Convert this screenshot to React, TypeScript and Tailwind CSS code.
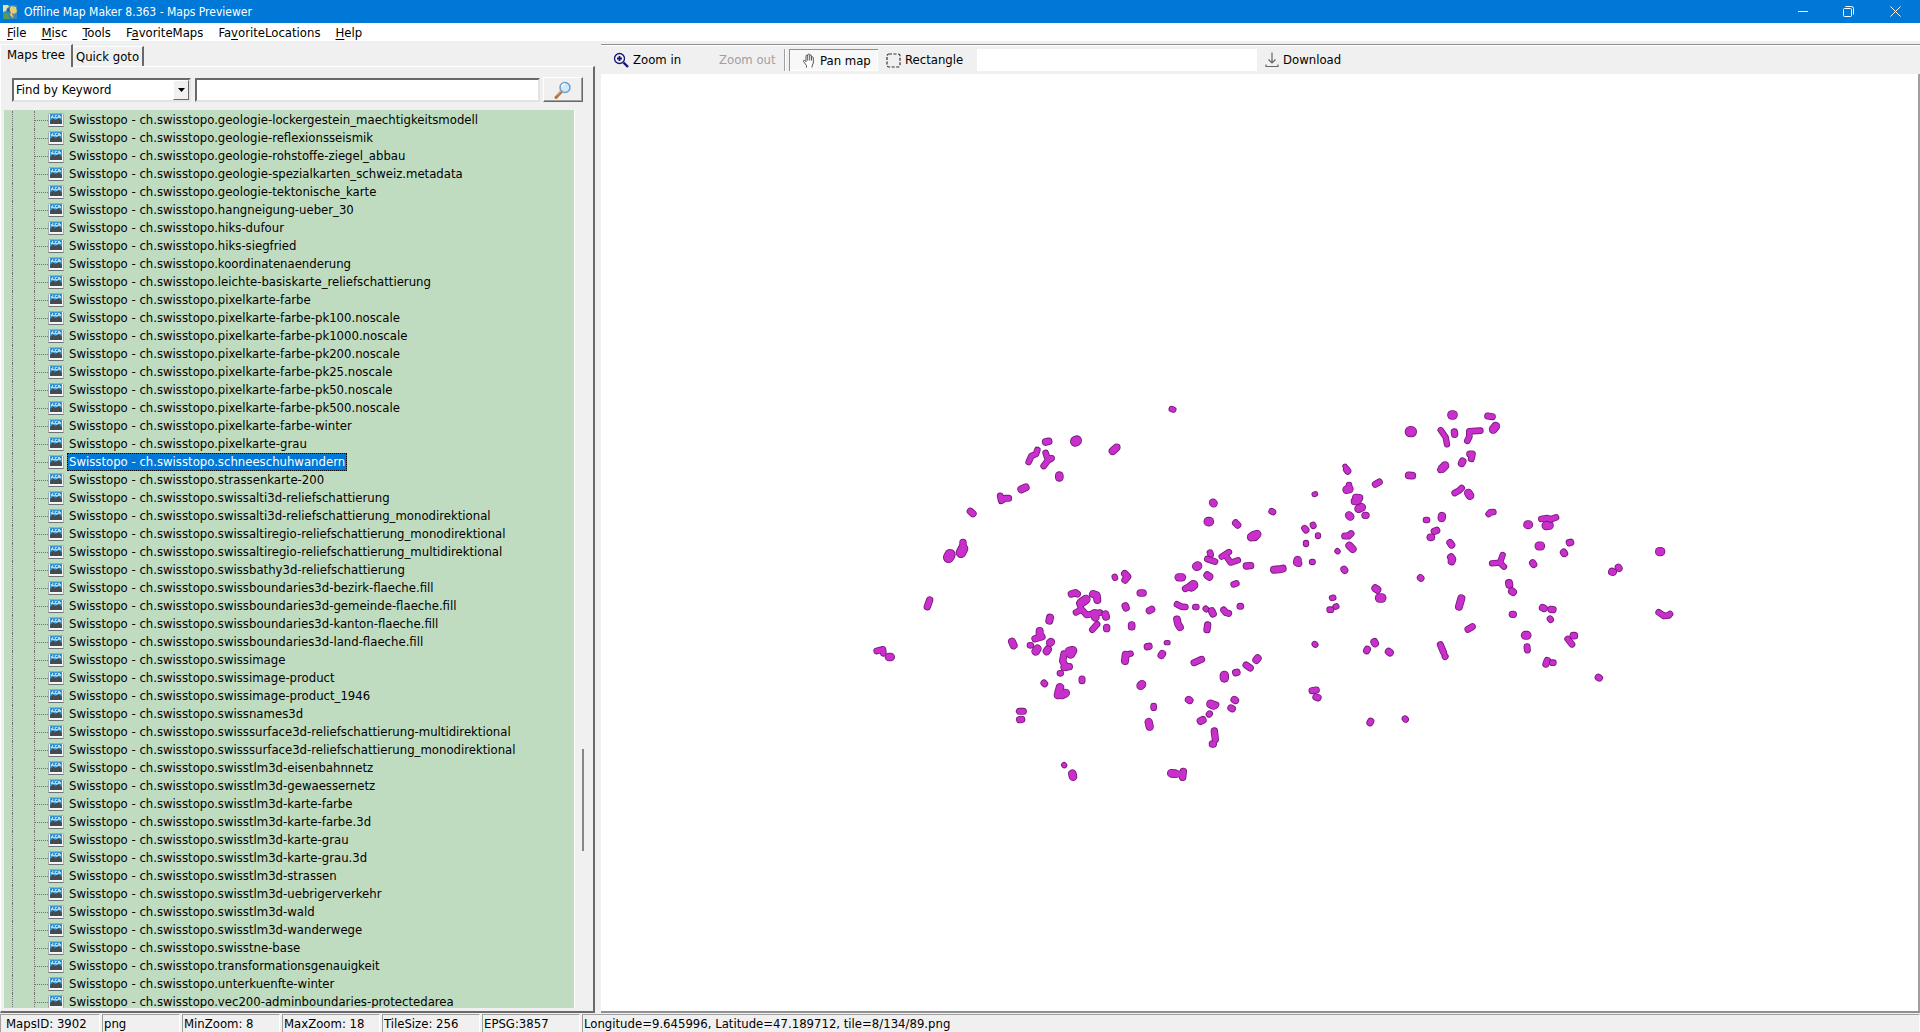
import { useState } from "react";
import type { ReactNode } from "react";

const MENU = [
  { before: "", key: "F", after: "ile" },
  { before: "", key: "M", after: "isc" },
  { before: "", key: "T", after: "ools" },
  { before: "F", key: "a", after: "voriteMaps" },
  { before: "Fa", key: "v", after: "oriteLocations" },
  { before: "", key: "H", after: "elp" },
];

const LAYERS = [
  "geologie-lockergestein_maechtigkeitsmodell",
  "geologie-reflexionsseismik",
  "geologie-rohstoffe-ziegel_abbau",
  "geologie-spezialkarten_schweiz.metadata",
  "geologie-tektonische_karte",
  "hangneigung-ueber_30",
  "hiks-dufour",
  "hiks-siegfried",
  "koordinatenaenderung",
  "leichte-basiskarte_reliefschattierung",
  "pixelkarte-farbe",
  "pixelkarte-farbe-pk100.noscale",
  "pixelkarte-farbe-pk1000.noscale",
  "pixelkarte-farbe-pk200.noscale",
  "pixelkarte-farbe-pk25.noscale",
  "pixelkarte-farbe-pk50.noscale",
  "pixelkarte-farbe-pk500.noscale",
  "pixelkarte-farbe-winter",
  "pixelkarte-grau",
  "schneeschuhwandern",
  "strassenkarte-200",
  "swissalti3d-reliefschattierung",
  "swissalti3d-reliefschattierung_monodirektional",
  "swissaltiregio-reliefschattierung_monodirektional",
  "swissaltiregio-reliefschattierung_multidirektional",
  "swissbathy3d-reliefschattierung",
  "swissboundaries3d-bezirk-flaeche.fill",
  "swissboundaries3d-gemeinde-flaeche.fill",
  "swissboundaries3d-kanton-flaeche.fill",
  "swissboundaries3d-land-flaeche.fill",
  "swissimage",
  "swissimage-product",
  "swissimage-product_1946",
  "swissnames3d",
  "swisssurface3d-reliefschattierung-multidirektional",
  "swisssurface3d-reliefschattierung_monodirektional",
  "swisstlm3d-eisenbahnnetz",
  "swisstlm3d-gewaessernetz",
  "swisstlm3d-karte-farbe",
  "swisstlm3d-karte-farbe.3d",
  "swisstlm3d-karte-grau",
  "swisstlm3d-karte-grau.3d",
  "swisstlm3d-strassen",
  "swisstlm3d-uebrigerverkehr",
  "swisstlm3d-wald",
  "swisstlm3d-wanderwege",
  "swisstne-base",
  "transformationsgenauigkeit",
  "unterkuenfte-winter",
  "vec200-adminboundaries-protectedarea",
];

// Each area is one or more brush strokes split by "|": brush size, then x y pairs,
// in thirds of a pixel from the sheet's origin.
const SHEETS = [
  {
    x: 259,
    y: 326,
    areas: [
      "21 557 126 566 124", "30 646 124 650 122", "22 758 153 769 143|14 772 139 773 139",
      "18 532 150 528 162 514 168 506 186", "18 557 159 563 177 575 175 563 182 551 198",
      "24 598 227 598 232", "22 484 268 497 262", "19 421 288 424 302 434 295 446 295",
      "20 331 334 339 341", "32 270 464 266 472", "20 309 427 309 440|30 309 446 303 458",
      "17 935 27 940 29", "17 764 530 765 533",
    ],
  },
  {
    x: 259,
    y: 506,
    areas: [
      "20 209 60 202 80", "18 50 213 69 208 70 220", "24 87 231 92 231", "22 456 185 461 196",
      "18 510 196 512 196", "22 570 113 568 122", "22 539 153 539 168|20 525 176 546 170",
      "24 532 206 527 214", "22 564 208 560 214", "23 573 186 570 188", "20 634 42 646 38 652 42",
      "22 699 42 710 46 712 60",
      "26 678 58 664 68|16 657 70 664 88|18 648 97 665 88 680 105 705 100 720 98|24 703 100 706 112",
      "22 736 103 738 110", "18 711 133 697 149", "20 740 142 740 146",
      "26 628 214 638 212 632 222|20 612 222 608 243 618 262|20 612 262 628 260|18 600 280 602 280",
      "19 552 309 554 311", "19 666 297 666 302", "24 600 322 594 345|24 605 345 617 339",
      "19 478 394 490 394", "20 479 419 485 418", "16 612 555 613 556", "24 637 581 639 590",
    ],
  },
  {
    x: 519,
    y: 406,
    areas: [
      "20 14 281 23 290 15 300", "21 61 339 69 339", "21 16 378 18 383", "20 88 392 95 388",
      "21 35 435 35 440", "22 17 524 15 543|17 20 524 32 521", "20 82 500 87 499", "14 139 488 144 488",
      "21 127 521 124 526", "24 66 613 62 617", "18 101 678 101 683", "23 86 726 89 740",
      "23 279 68 281 70", "27 265 125 268 125", "20 347 129 353 135", "25 394 171 411 163|29 402 168 403 168",
      "18 455 94 459 96", "15 583 43 586 42", "18 687 15 686 25|24 680 29 688 27",
      "22 708 53 718 54 712 64 704 64", "24 716 86 725 82", "23 687 106 691 110", "20 735 106 738 106",
      "19 766 13 778 6", "19 554 145 558 150", "18 579 135 580 137", "17 594 166 594 168",
      "17 558 189 558 192", "19 674 168 685 168 693 161", "22 688 197 698 207", "16 652 213 653 214",
      "20 672 268 674 271", "22 462 269 478 268 488 266", "23 533 240 531 247|18 534 250 537 251",
      "17 576 246 578 246", "20 379 258 392 257", "17 305 230 327 216|17 318 228 332 248 354 241",
      "18 270 218 272 224", "18 262 237 285 245", "26 230 259 233 258", "22 262 286 268 290",
      "23 176 292 186 292", "28 220 315 214 320|19 196 326 212 318", "18 341 313 349 310",
      "18 171 373 184 380 196 381", "18 226 381 229 381", "17 257 386 259 388", "21 275 393 279 401",
      "19 311 390 318 398 326 400", "19 360 379 362 379", "21 171 418 174 432 180 442", "20 263 435 261 449",
      "19 222 548 245 538", "26 313 586 313 594", "20 347 578 351 577", "19 378 555 391 564",
      "22 413 535 409 540", "21 206 659 209 661", "25 272 672 280 676|18 287 676 288 674",
      "18 267 703 269 701", "22 242 723 248 720", "21 343 659 346 661", "20 333 684 337 686",
      "20 283 753 286 778|20 277 792 280 792", "24 154 880 165 881|19 165 882 180 882|20 190 874 188 892",
      "17 636 354 640 353", "17 647 380 649 379", "18 629 389 633 389", "22 766 325 772 329",
      "27 779 354 785 354", "17 584 492 586 494", "22 763 486 765 490", "20 742 508 740 512",
      "21 806 515 810 518", "19 576 632 589 630", "20 588 651 594 653", "20 752 724 750 728",
    ],
  },
  {
    x: 699,
    y: 326,
    areas: [
      "14 135 199 141 208|20 140 209 143 213", "32 331 95 334 95", "27 456 45 459 45", "19 563 48 577 50",
      "25 587 79 580 88", "17 422 90 437 112 441 133", "20 463 96 464 103", "18 541 92 508 94 508 110 502 122",
      "19 509 162 517 162 514 176", "21 488 184 485 190", "24 435 197 426 206|17 421 210 424 209",
      "21 326 226 337 227", "18 464 279 477 272 485 264", "24 505 279 510 287", "18 566 342 571 337 580 336",
      "18 378 360 381 360", "23 426 348 425 354", "20 403 394 410 391", "21 391 412 394 412",
      "20 450 428 455 435", "22 453 472 457 478 455 484", "19 361 533 363 535",
      "17 608 465 600 488 612 500|17 576 490 600 488", "25 683 374 686 374", "25 738 377 748 376",
      "18 724 357 742 354 752 358 768 352", "25 717 438 722 438", "20 698 489 701 493", "22 627 549 628 554",
      "22 636 574 639 576", "20 637 643 640 643", "22 484 595 477 620", "19 504 688 517 680",
      "19 421 734 431 758|18 435 770 436 769", "21 728 623 732 625", "20 753 628 759 629", "18 750 656 752 659",
      "25 676 706 681 706", "19 681 740 682 750", "20 742 782 738 792", "18 757 788 760 788",
      "18 315 956 317 958",
    ],
  },
  {
    x: 939,
    y: 426,
    areas: [
      "20 88 128 92 127", "21 71 157 73 160", "20 235 202 237 205", "22 216 215 219 216", "26 359 155 362 155",
      "18 356 337 372 348 386 346 390 342", "18 83 417 96 433", "21 100 407 103 407", "20 175 532 178 534",
    ],
  },
];

const STATUS = [
  { text: "MapsID: 3902", cell: "w-[100px] pl-[5px]" },
  { text: "png", cell: "w-[78px] pl-px" },
  { text: "MinZoom: 8", cell: "w-[98px] pl-px" },
  { text: "MaxZoom: 18", cell: "w-[98px] pl-px" },
  { text: "TileSize: 256", cell: "w-[98px] pl-px" },
  { text: "EPSG:3857", cell: "w-[98px] pl-px" },
  { text: "Longitude=9.645996, Latitude=47.189712, tile=8/134/89.png", cell: "flex-1 pl-px" },
];

function AppIcon() {
  return (
    <svg width="16" height="16" viewBox="0 0 16 16" aria-hidden="true">
      <rect x="1" y="1" width="14" height="14" fill="#3f86b8" />
      <path d="M1 1h5l1 2-2 1-1 3-3 1z" fill="#dfe6b0" />
      <path d="M9 2l5 1 1 5-3 2-1 4-3-3 1-3-2-2z" fill="#e6cf73" />
      <path d="M2 9l4 1 1 5H2z" fill="#5d9a4d" />
      <path d="M10 9l2 1-1 3z" fill="#7a6a2f" />
      <path d="M6 4l2 1-1 3-2-1z" fill="#1f5f8f" />
    </svg>
  );
}

function LayerIcon() {
  return (
    <svg className="shrink-0" width="16" height="14" viewBox="0 0 16 14" aria-hidden="true">
      <rect x="0.5" y="0.5" width="15" height="13" rx="1" fill="#f4f6f6" stroke="#a3abaf" />
      <path d="M0.500 13.500h15" stroke="#6c7276" />
      <rect x="2" y="1" width="12" height="10" fill="#3a97d3" />
      <path d="M3 2h2v2h2V2h2v2h1V2h3v3h-2L9 6 7 5 5 6 3 5z" fill="#a5d6f2" />
      <path d="M3 2h1v1H3zM8 3h1v1H8zM12 2h1v1h-1z" fill="#2276b0" />
      <path d="M2 11V8l3-3 2 2 2-1 2-1 3 3v3z" fill="#454c50" />
    </svg>
  );
}

function SearchIcon() {
  return (
    <svg width="18" height="18" viewBox="0 0 18 18" aria-hidden="true">
      <path d="M7.5 10.500 2 16.500" stroke="#b5713f" strokeWidth="3" strokeLinecap="round" />
      <path d="M7.500 9.500 3 14.500" stroke="#e6b58a" strokeWidth="1" />
      <circle cx="11" cy="6.500" r="5" fill="#cdeafc" stroke="#6f9fc9" strokeWidth="1.500" />
      <path d="M8 6a3 3 0 0 1 3-3" stroke="#fff" strokeWidth="1.500" fill="none" />
    </svg>
  );
}

function ZoomInIcon() {
  return (
    <svg width="16" height="16" viewBox="0 0 16 16" fill="none" stroke="#14147a" aria-hidden="true">
      <circle cx="6.500" cy="6.500" r="5" strokeWidth="1.300" />
      <path d="M6.500 4v5M4 6.500h5" strokeWidth="1.800" />
      <path d="M10.500 10.500 15 15" strokeWidth="2.400" />
    </svg>
  );
}

function HandIcon() {
  return (
    <svg width="14" height="16" viewBox="0 0 14 16" fill="#fff" stroke="#555" strokeLinejoin="round" aria-hidden="true">
      <path d="M4.500 14.500v-2L1.500 8.500c-.6-1 .6-1.700 1.300-1l1.200 1.300V3c0-1.200 1.600-1.200 1.700 0V2c0-1.300 1.900-1.300 2 0v.8c.2-1.100 1.700-1 1.800.1V4.500c.2-1 1.700-.9 1.800.1v5.400l-1.300 3v1.500M5.700 3v4.500M7.700 2.800v4.700M9.500 3v4.500" />
    </svg>
  );
}

function RectangleIcon() {
  return (
    <svg width="15" height="15" viewBox="0 0 15 15" fill="none" stroke="#333" aria-hidden="true">
      <rect x="1" y="1" width="13" height="13" rx="2" strokeWidth="1.200" strokeDasharray="3 1.500" />
    </svg>
  );
}

function DownloadIcon() {
  return (
    <svg width="14" height="16" viewBox="0 0 14 16" fill="none" stroke="#666" strokeWidth="1.200" aria-hidden="true">
      <path d="M7 0.500v10.500M3.500 7.500 7 11l3.500-3.500M1 12.500v2h12v-2" />
    </svg>
  );
}

function TitleBar() {
  return (
    <header className="flex h-[23px] shrink-0 items-center bg-[#0078d7] pl-0.5 text-white">
      <AppIcon />
      <h1 className="ml-1.5 flex-1 text-[12px]">Offline Map Maker 8.363 - Maps Previewer</h1>
      <button aria-label="Minimize" className="flex h-5 w-[45px] items-center justify-center">
        <svg width="11" height="11" viewBox="0 0 11 11" stroke="currentColor">
          <path d="M0 5.500h10" />
        </svg>
      </button>
      <button aria-label="Restore" className="flex h-5 w-[45px] items-center justify-center">
        <svg width="11" height="11" viewBox="0 0 11 11" fill="none" stroke="currentColor">
          <rect x="0.500" y="2.500" width="8" height="8" rx="1" />
          <path d="M2.500 0.500h6a2 2 0 0 1 2 2v6" />
        </svg>
      </button>
      <button aria-label="Close" className="flex h-5 w-[49px] items-center justify-center">
        <svg width="11" height="11" viewBox="0 0 11 11" stroke="currentColor">
          <path d="m.5.5 10 10M10.500.5l-10 10" />
        </svg>
      </button>
    </header>
  );
}

function MenuBar() {
  return (
    <nav className="flex h-[18px] shrink-0 items-center gap-px bg-white pt-0.5">
      {MENU.map((item) => (
        <button key={item.after} className="px-[7px]">
          {item.before}
          <span className="underline underline-offset-2">{item.key}</span>
          {item.after}
        </button>
      ))}
    </nav>
  );
}

function SearchRow() {
  const [keyword, setKeyword] = useState("");

  return (
    <form className="flex items-center pr-2.5 pl-2.5" onSubmit={(event) => event.preventDefault()}>
      <div className="relative">
        <select
          aria-label="Search mode"
          className="block h-6 w-[179px] appearance-none border-2 border-t-[#696969] border-r-[#e3e3e3] border-b-[#e3e3e3] border-l-[#696969] bg-white pl-0.5"
        >
          <option>Find by Keyword</option>
        </select>
        <span className="pointer-events-none absolute top-0.5 right-0.5 flex h-5 w-4 items-center justify-center border border-t-white border-r-[#696969] border-b-[#696969] border-l-white bg-[#f0f0f0]">
          <svg width="7" height="4" viewBox="0 0 7 4" aria-hidden="true">
            <path d="M0 0h7L3.500 4z" />
          </svg>
        </span>
      </div>
      <input
        aria-label="Keyword"
        value={keyword}
        onChange={(event) => setKeyword(event.target.value)}
        className="ml-1 h-6 min-w-0 flex-1 border-2 border-t-[#696969] border-r-[#e3e3e3] border-b-[#e3e3e3] border-l-[#696969] bg-white px-1 outline-none"
      />
      <button
        aria-label="Search"
        className="ml-[3px] flex h-[25px] w-10 items-center justify-center border border-t-white border-r-[#696969] border-b-[#696969] border-l-white bg-[#f0f0f0] shadow-[inset_-1px_-1px_#a0a0a0]"
      >
        <SearchIcon />
      </button>
    </form>
  );
}

function LayerTree() {
  const [selected, setSelected] = useState("schneeschuhwandern");

  return (
    <div className="flex min-h-0 flex-1 pb-[3px]">
      <ul className="ml-0.5 min-w-0 flex-1 overflow-hidden border-r border-white bg-[#c0dcc0] pt-px pl-2">
        {LAYERS.map((layer) => (
          <li key={layer} className="flex h-[18px] items-stretch border-l border-dotted border-[#707070] pl-[21px]">
            <span className="flex w-3.5 shrink-0 items-center border-l border-dotted border-[#707070]">
              <span className="w-full border-t border-dotted border-[#707070]" />
            </span>
            <button className="flex items-center whitespace-nowrap" onClick={() => setSelected(layer)}>
              <LayerIcon />
              <span
                className={
                  layer === selected
                    ? "ml-[3px] border border-dotted border-black bg-[#0078d7] px-px leading-4 text-white"
                    : "ml-[3px] border border-transparent px-px leading-4"
                }
              >
                Swisstopo - ch.swisstopo.{layer}
              </span>
            </button>
          </li>
        ))}
      </ul>
      <div className="flex w-[18px] flex-col items-center pr-0.5">
        <div className="grow-[640]" />
        <div className="w-0.5 grow-[102] bg-[#868686]" />
        <div className="grow-[157]" />
      </div>
    </div>
  );
}

function Sidebar() {
  return (
    <aside className="flex w-[595px] shrink-0 flex-col pt-[3px] pb-px">
      <div className="flex h-[22px] items-end">
        <button className="z-10 -mb-px h-[23px] w-[73px] border-t border-r-2 border-l border-t-white border-r-[#696969] border-l-white bg-[#f0f0f0] pb-0.5">
          Maps tree
        </button>
        <button className="h-5 w-[71px] border-t border-r-2 border-t-white border-r-[#696969]">Quick goto</button>
      </div>
      <div className="flex min-h-0 flex-1 flex-col border-t border-r-2 border-b-2 border-l border-t-white border-r-[#696969] border-b-[#696969] border-l-white pt-2.5 pl-px">
        <SearchRow />
        <div className="mt-2 flex min-h-0 flex-1 flex-col">
          <LayerTree />
        </div>
      </div>
    </aside>
  );
}

function ToolButton({ icon, children, className }: { icon?: ReactNode; children: ReactNode; className?: string }) {
  return (
    <button className={`flex h-[22px] items-center gap-1 whitespace-nowrap ${className ?? ""}`}>
      {icon}
      {children}
    </button>
  );
}

function Toolbar() {
  return (
    <div className="flex h-7 shrink-0 items-center bg-[#f0f0f0] pl-3">
      <ToolButton icon={<ZoomInIcon />} className="w-[82px]">Zoom in</ToolButton>
      <button disabled className="flex h-[22px] w-[89px] items-center pl-6 whitespace-nowrap text-[#a0a0a0]">
        Zoom out
      </button>
      <span className="mr-[3px] h-[22px] w-0.5 border-r border-l border-r-white border-l-[#a0a0a0]" />
      <ToolButton
        icon={<HandIcon />}
        className="w-[89px] border-t border-l border-[#909090] bg-[#f8f8f8] pt-px pl-3 shadow-[inset_-1px_-1px_#fff]"
      >
        Pan map
      </ToolButton>
      <ToolButton icon={<RectangleIcon />} className="ml-2 w-[91px]">Rectangle</ToolButton>
      <input aria-label="Place" className="h-[22px] w-[280px] bg-white px-1 outline-none" />
      <ToolButton icon={<DownloadIcon />} className="ml-2">Download</ToolButton>
    </div>
  );
}

// Darker brush first, then a thinner one over it, so an area keeps a single outline.
function Area({ shape }: { shape: string }) {
  const strokes = shape.split("|").map((part) => {
    const [size, ...points] = part.split(" ");
    return { size: Number(size), points: points.join(" ") };
  });

  return (
    <g fill="none" strokeLinecap="round" strokeLinejoin="round">
      {strokes.map((s) => (
        <polyline key={s.points} points={s.points} stroke="#74187a" strokeWidth={s.size + 2} />
      ))}
      {strokes.map((s) => (
        <polyline key={s.points} points={s.points} stroke="#c92fcb" strokeWidth={s.size - 3} />
      ))}
    </g>
  );
}

function MapCanvas() {
  return (
    <div className="min-h-0 flex-1 border-r-2 border-[#a0a0a0] bg-white">
      <svg className="block size-full" role="img" aria-label="Snowshoe hiking areas">
        {SHEETS.map((sheet) => (
          <g key={`${sheet.x}-${sheet.y}`} transform={`translate(${sheet.x} ${sheet.y}) scale(${1 / 3})`}>
            {sheet.areas.map((shape) => (
              <Area key={shape} shape={shape} />
            ))}
          </g>
        ))}
      </svg>
    </div>
  );
}

function StatusBar() {
  return (
    <footer className="flex h-[18px] shrink-0 gap-0.5">
      {STATUS.map(({ text, cell }) => (
        <div
          key={text}
          className={`flex items-center overflow-hidden border-t border-r border-l border-t-[#a0a0a0] border-r-white border-l-[#a0a0a0] whitespace-nowrap ${cell}`}
        >
          {text}
        </div>
      ))}
    </footer>
  );
}

export default function App() {
  return (
    <div className="flex h-screen flex-col overflow-hidden bg-[#f0f0f0] font-['DejaVu_Sans_Condensed','Noto_Sans',sans-serif] text-[13px] leading-4 text-black">
      <TitleBar />
      <MenuBar />
      <div className="flex min-h-0 flex-1">
        <Sidebar />
        <main className="mt-[3px] mb-px ml-1.5 flex min-w-0 flex-1 flex-col border-t border-b-2 border-[#909090]">
          <div className="h-px shrink-0 bg-white" />
          <Toolbar />
          <MapCanvas />
        </main>
      </div>
      <StatusBar />
    </div>
  );
}
